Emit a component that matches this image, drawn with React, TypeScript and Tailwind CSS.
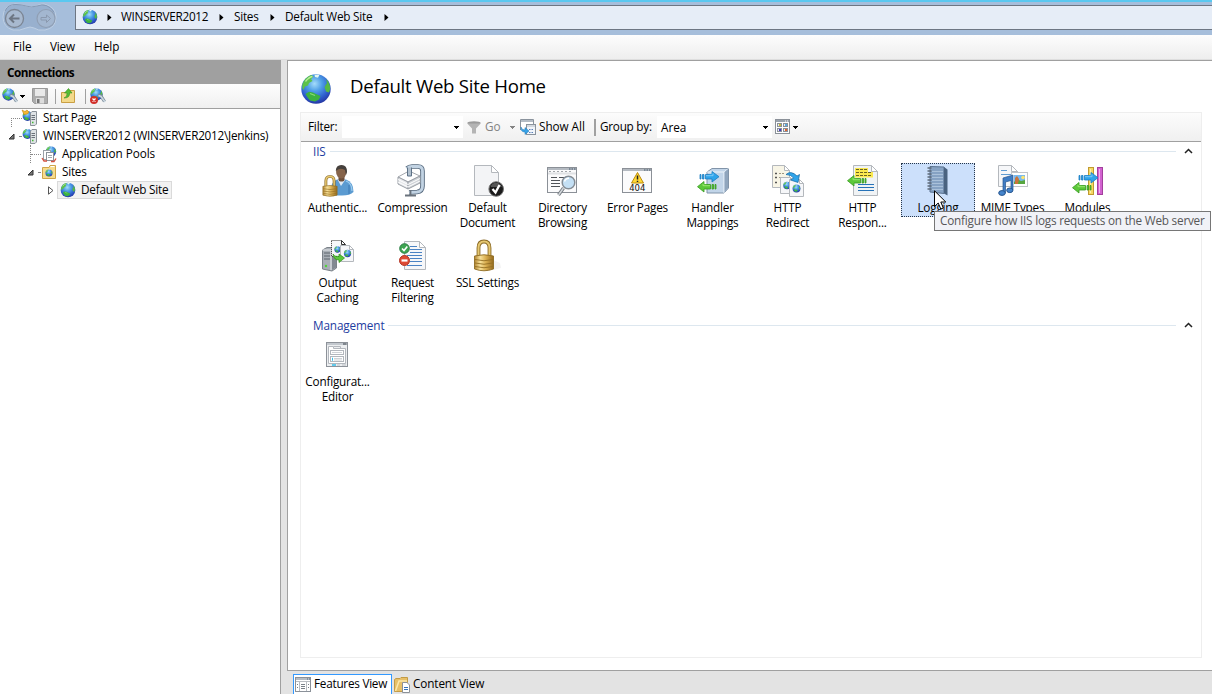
import React, { useId } from "react";

type IconProps = { className?: string };

function Svg({ size = 32, className = "", children }: { size?: number; className?: string; children: React.ReactNode }) {
  return (
    <svg width={size} height={size} viewBox={`0 0 ${size} ${size}`} className={`shrink-0 overflow-visible ${className}`} fill="none">
      {children}
    </svg>
  );
}

function GlobeShape({ cx, cy, r }: { cx: number; cy: number; r: number }) {
  const id = useId();
  return (
    <g transform={`translate(${cx - r} ${cy - r}) scale(${r / 15})`}>
      <defs>
        <radialGradient id={id} cx="0.45" cy="0.32" r="0.72">
          <stop offset="0" stopColor="#a4dcfa" />
          <stop offset="0.35" stopColor="#4f9fe6" />
          <stop offset="0.7" stopColor="#2f5fce" />
          <stop offset="1" stopColor="#232f9c" />
        </radialGradient>
      </defs>
      <circle cx="15" cy="15" r="14.7" fill={`url(#${id})`} />
      <path d="M1.500 10 Q4 3.500 10 1 L12.500 2.500 10 5 11.500 7 8 9 7 11.500 4 12.500 2.500 16 Q0.500 14 1.500 10Z" fill="#5cc24a" />
      <path d="M4.500 20 L8 17.800 12 18.500 15 20 19.500 22 18 25.500 14 27.500 9 26.500 7 24Z" fill="#3cb23f" />
      <path d="M25 5 L27.500 8 Q30.500 14 28 18.500 L25 17.500 23.500 13 26 9Z" fill="#55b944" />
      <path d="M13.500 0.800 L18.500 0.800 17 3.800 14 3Z" fill="#e4f7ee" />
      <path d="M4.500 7.500 Q8 3 11.500 2.500" stroke="#b9ec9a" strokeWidth="1.300" />
      <path d="M9 19.500 L14 21.500" stroke="#8adc74" strokeWidth="1.200" />
    </g>
  );
}

function Globe({ size = 16, r = 7.5, className = "" }: { size?: number; r?: number; className?: string }) {
  return (
    <Svg size={size} className={className}>
      <GlobeShape cx={size / 2} cy={size / 2} r={r} />
    </Svg>
  );
}

function Lock({ x, y, w, h }: { x: number; y: number; w: number; h: number }) {
  const id = useId();
  return (
    <g transform={`translate(${x} ${y}) scale(${w / 20} ${h / 31})`}>
      <defs>
        <linearGradient id={id} x1="0" x2="1" y1="0" y2="0">
          <stop offset="0" stopColor="#b38530" />
          <stop offset="0.3" stopColor="#f7e19a" />
          <stop offset="0.6" stopColor="#d9ae50" />
          <stop offset="1" stopColor="#946a1e" />
        </linearGradient>
      </defs>
      <path d="M4.5 17 V8 Q4.5 1.5 10 1.5 Q15.500 1.5 15.500 8 V17" stroke="#8a6a26" strokeWidth="3.800" />
      <path d="M4.500 17 V8 Q4.500 1.500 10 1.500 Q15.500 1.500 15.500 8 V17" stroke="#e6c872" strokeWidth="2" />
      <path d="M0.5 16 Q10 13.5 19.500 16 V29 Q10 32.500 0.5 29Z" fill={`url(#${id})`} stroke="#8f6c24" strokeWidth="0.9" />
      <path d="M1 19.500 Q10 22 19 19.500 M1 23 Q10 25.500 19 23 M1 26.500 Q10 29 19 26.500" stroke="#946f24" strokeWidth="0.9" />
    </g>
  );
}

function Page({ x, y, w, h, fold = 6, fill = "#f6f7f9", dashed = false }: { x: number; y: number; w: number; h: number; fold?: number; fill?: string; dashed?: boolean }) {
  return (
    <g transform={`translate(${x + 0.5} ${y + 0.5})`} stroke={dashed ? "#333" : "#b4b8bd"}>
      <path d={`M0 0 H${w - fold} L${w} ${fold} V${h} H0Z`} fill={fill} strokeDasharray={dashed ? "1 1" : undefined} />
      <path d={`M${w - fold} 0 V${fold} H${w}Z`} fill="#fff" />
    </g>
  );
}

const BLUE = "#2fa4ea";
const GREEN = "#5cc83a";

function ArrowRight({ x, y }: { x: number; y: number }) {
  return (
    <g transform={`translate(${x} ${y})`} fill={BLUE} stroke="#1d7cc0" strokeWidth="0.8">
      <path d="M0 3.500 H1 V8 H0Z M2.500 3.500 H4 V8 H2.500Z" />
      <path d="M5.500 3.500 H12 V0.500 L19 5.700 12 11 V8 H5.500Z" />
      <path d="M6 4.700 H13 V2.500" stroke="#8fd3fa" />
    </g>
  );
}

function ArrowLeft({ x, y }: { x: number; y: number }) {
  return (
    <g transform={`translate(${x} ${y})`} fill={GREEN} stroke="#369b20" strokeWidth="0.8">
      <path d="M19 3.500 H18 V8 H19Z M16.500 3.500 H15 V8 H16.500Z" />
      <path d="M13.500 3.500 H7 V0.500 L0.500 5.700 7 11 V8 H13.500Z" />
      <path d="M13 4.700 H6 V2.800" stroke="#a6ec7c" />
    </g>
  );
}

function AuthIcon() {
  return (
    <Svg>
      <path d="M8 29 Q8 17 15 14.500 H24 Q31.500 17 31.500 27 Q28 30.500 20 30.500 Q12 30.500 8 29Z" fill="#5b9bd1" />
      <path d="M15.500 14.500 L19 21 23.500 14.500Z" fill="#dfeaf4" />
      <path d="M27 20 V29" stroke="#3c78b4" />
      <path d="M24 16 Q30 18 30 26" stroke="#9ccbee" strokeWidth="1.3" />
      <rect x="16.500" y="10" width="6" height="6.500" rx="2" fill="#6d4f3a" />
      <ellipse cx="19.300" cy="7" rx="5.200" ry="6.500" fill="#85634a" />
      <path d="M13.800 6 Q13.800 0 19.500 0 Q25.200 0 25 7 L24 10 23 5 Q19 3 16 4.500Z" fill="#45403c" />
      <Lock x={0.5} y={10.500} w={15} h={21} />
    </Svg>
  );
}

function CompressionIcon() {
  return (
    <Svg>
      <path d="M10 3.500 Q12 1.500 15 1.500 H21 Q25.500 1.500 25.500 6 V21 Q25.500 26.500 20 27 L12 27.500" stroke="#56697d" strokeWidth="4.600" />
      <path d="M10 3.500 Q12 1.500 15 1.500 H21 Q25.500 1.500 25.500 6 V21 Q25.500 26.500 20 27 L12 27.500" stroke="#c2d3e3" strokeWidth="2.800" />
      <path d="M1 12 L12 6 23 11 11 17Z" fill="#fff" stroke="#a4a8ae" />
      <path d="M1 12 V19 L11 24 V17Z" fill="#e6e8eb" stroke="#9a9fa6" />
      <path d="M11 17 V24 L23 18 V11Z" fill="#cfd3d8" stroke="#9a9fa6" />
      <path d="M1 14.500 L11 19.500 23 13.500 M1 17 L11 22 23 16" stroke="#fff" />
      <path d="M10.500 2.500 V11 H14.500 V2.500" fill="#b2c1cf" stroke="#5d7186" />
      <path d="M13.500 25 V31 M8 30.500 H19" stroke="#6a737d" strokeWidth="1.800" />
    </Svg>
  );
}

function DefaultDocIcon() {
  return (
    <Svg>
      <Page x={2} y={0} w={24} h={30} fold={7} fill="#f3f4f6" />
      <circle cx="24.200" cy="24" r="7.300" fill="#1b1b1b" stroke="#777" />
      <path d="M18.500 22 Q20 17.800 24 17.800 Q28.500 18 29.800 22Z" fill="#555" />
      <path d="M20.500 24 L23.500 27.500 27.500 20" stroke="#fff" strokeWidth="2.300" />
    </Svg>
  );
}

function WindowFrame({ x, y, w, h }: { x: number; y: number; w: number; h: number }) {
  return (
    <g>
      <rect x={x + 0.5} y={y + 0.5} width={w - 1} height={h - 1} fill="#fbfbfc" stroke="#8b9097" />
      <rect x={x + 1} y={y + 1} width={w - 2} height="2" fill="#b4bac1" />
      <path d={`M${x + w - 8} ${y + 2} h1.500 m1 0 h1.500 m1 0 h1.500`} stroke="#43566b" />
    </g>
  );
}

function DirectoryIcon() {
  return (
    <Svg>
      <WindowFrame x={0} y={2} w={30} h={26} />
      <path d="M1 8.500 H29" stroke="#dfe1e4" strokeWidth="2" />
      <path d="M2 6.500 H24" stroke="#a1a5aa" strokeDasharray="2 2" />
      <path d="M4 12.500 H10 M12 12.500 H20 M4 15.500 H13 M4 18.500 H13 M4 21.500 H13" stroke="#4f5358" />
      <path d="M16.500 23 L11.500 30" stroke="#757b81" strokeWidth="3.300" />
      <path d="M16.500 23 L11.500 30" stroke="#d5d9dd" strokeWidth="1.400" />
      <circle cx="21.500" cy="17.500" r="6.300" fill="#c4e0f5" stroke="#858d95" strokeWidth="1.500" />
      <path d="M17.500 16.500 Q18.500 13.200 22 13.200" stroke="#fff" strokeWidth="1.500" />
    </Svg>
  );
}

function ErrorPagesIcon() {
  return (
    <Svg>
      <WindowFrame x={0} y={3} w={30} h={25} />
      <path d="M15.500 7.500 L21.500 18 H9.500Z" fill="#ffd937" stroke="#bc8b0c" strokeLinejoin="round" />
      <path d="M15.500 10.500 V14.500 M15.500 15.700 V17" stroke="#222" strokeWidth="1.500" />
      <text x="15.300" y="26" textAnchor="middle" fontSize="8.500" fontFamily="DejaVu Sans, sans-serif" fill="#111">404</text>
    </Svg>
  );
}

function HandlerIcon() {
  return (
    <Svg>
      <path d="M10 7 L15 3.500 H31.500 V23 L27 28 H10Z" fill="#c2d5e9" stroke="#8194a9" />
      <path d="M10 7 H27 V28 M27 7 L31.500 3.500" stroke="#eef5fb" />
      <path d="M27.500 7 L31 4 V23 L27.500 27Z" fill="#8fa5bd" />
      <ArrowRight x={3} y={6} />
      <ArrowLeft x={0} y={16} />
    </Svg>
  );
}

function RedirectIcon() {
  return (
    <Svg>
      <Page x={0} y={0} w={17} h={22} fold={5} fill="#f8f5e6" />
      <path d="M3 8.500 H5 M3 12.500 H5 M3 17.500 H5" stroke="#555" strokeWidth="1.400" />
      <path d="M7 8.500 H13 M7 12.500 H9" stroke="#9d9681" strokeDasharray="2 1" />
      <Page x={8} y={12} w={14} h={16} fold={4} />
      <GlobeShape cx={15} cy={20.500} r={3.800} />
      <Page x={17} y={14} w={14} h={17} fold={4} />
      <GlobeShape cx={24.500} cy={23.500} r={4} />
      <path d="M14 9.500 Q19 5 25 11 L27.500 9.500 26 17.500 18.500 15 21.500 13 Q19 9.500 14 9.500Z" fill={BLUE} stroke="#12649f" strokeWidth="0.700" />
    </Svg>
  );
}

function ResponseIcon() {
  return (
    <Svg>
      <Page x={6} y={0} w={24} h={30} fold={6} fill="#f0f3f5" />
      <path d="M8 3 H21 V7 H26 V12.500 H8Z" fill="#fbe94e" />
      <path d="M9 4.500 H20 M9 7.500 H25 M9 10.500 H25" stroke="#6b6322" strokeDasharray="3 1" />
      <path d="M11 19.500 H27 M11 22.500 H27 M11 25.500 H27" stroke="#2672b8" />
      <ArrowLeft x={0} y={10} />
    </Svg>
  );
}

function LoggingIcon() {
  return (
    <Svg>
      <path d="M7 1.500 L21 2 V28.500 L7 27Z" fill="#86a2c3" stroke="#5a7391" />
      <path d="M21 2 L24.500 4.500 V30.500 L21 28.500Z" fill="#4a6380" />
      <path d="M9 6.500 H20 M9 9.500 H20 M9 12.500 H20 M9 15.500 H20 M9 18.500 H20 M9 21.500 H20 M9 24.500 H20" stroke="#aac1da" />
      <path d="M4.500 3 H8.500 M4.500 6 H8.500 M4.500 9 H8.500 M4.500 12 H8.500 M4.500 15 H8.500 M4.500 18 H8.500 M4.500 21 H8.500 M4.500 24 H8.500" stroke="#5d6a79" strokeWidth="1.300" />
    </Svg>
  );
}

function MimeIcon() {
  return (
    <Svg>
      <Page x={1} y={0} w={19} h={21} fold={6} />
      <path d="M4 5.500 H10 M4 9.500 H14" stroke="#5f9bd2" />
      <rect x="14.500" y="7.500" width="16" height="14" fill="#fff" stroke="#c0c4c9" />
      <rect x="17" y="10" width="11" height="9" fill="#78baf0" />
      <path d="M17 19 V17 L20 14 24 16 28 15 V19Z" fill="#57a63f" />
      <circle cx="26" cy="12.500" r="1.800" fill="#ffe46b" />
      <path d="M18 13 L20 11 22 14 21 19 H18Z" fill="#c9743a" />
      <path d="M6 13 L16 10 V25 H14 V15.500 L8.500 17 V28 H6Z" fill="#3f7cc4" stroke="#27568f" strokeWidth="0.700" />
      <ellipse cx="5" cy="28" rx="3.300" ry="2.400" fill="#4685cc" stroke="#27568f" />
      <ellipse cx="12.800" cy="25.300" rx="3.100" ry="2.300" fill="#4685cc" stroke="#27568f" />
    </Svg>
  );
}

function ModulesIcon() {
  return (
    <Svg>
      <rect x="16.500" y="2.500" width="5" height="27" fill="#f5d864" stroke="#c09a30" />
      <rect x="25.500" y="2.500" width="5" height="27" fill="#d262d0" stroke="#a33f9d" />
      <path d="M18.500 4 V28" stroke="#fdf0ac" />
      <path d="M27.500 4 V28" stroke="#f0b0ed" />
      <ArrowRight x={7} y={7} />
      <ArrowLeft x={0} y={17} />
    </Svg>
  );
}

function OutputIcon() {
  return (
    <Svg>
      <path d="M0.500 10 L5 7.500 H14.500 V28 L10 31 0.500 29Z" fill="#a9afb6" stroke="#7b8289" />
      <path d="M0.500 10 H9 V30" stroke="#e4e7ea" />
      <path d="M2 13 H8 M2 16 H8 M2 19 H8" stroke="#5c646d" />
      <path d="M10 10 L14 8 V27.500 L10 30Z" fill="#828991" />
      <circle cx="4" cy="26" r="1.200" fill="#4fd33a" />
      <Page x={9} y={0} w={14} h={16} fold={4} dashed />
      <GlobeShape cx={15.500} cy={9.500} r={3.200} />
      <Page x={18} y={5} w={13} h={16} fold={4} />
      <GlobeShape cx={25.500} cy={13.500} r={3.700} />
      <path d="M11 14 Q12 17 17 16.500 V14 L22.500 18 17 22.500 V20 Q11.500 20 11 14Z" fill={GREEN} stroke="#2d8f17" strokeWidth="0.700" />
    </Svg>
  );
}

function FilteringIcon() {
  return (
    <Svg>
      <Page x={7} y={1} w={21} h={28} fold={6} />
      <path d="M13 6.500 H20 M13 9.500 H25 M13 12.500 H25 M10 15.500 H25 M13 18.500 H25 M13 21.500 H25 M10 25.500 H25" stroke="#4b83c3" />
      <circle cx="7.500" cy="8.500" r="4.800" fill="#3da551" stroke="#2a7d44" />
      <path d="M5 8.500 L7 10.500 10.300 6.500" stroke="#fff" strokeWidth="1.600" />
      <circle cx="7.500" cy="20.500" r="5" fill="#de4a34" stroke="#b33424" />
      <path d="M4.500 20.500 H10.500" stroke="#fff" strokeWidth="2.200" />
    </Svg>
  );
}

function SslIcon() {
  return (
    <Svg>
      <path d="M21 30 L29 28 28 23 21 20Z" fill="#f3f3f3" />
      <Lock x={2} y={0} w={20} h={31} />
    </Svg>
  );
}

function ConfigIcon() {
  return (
    <Svg>
      <rect x="4.500" y="3.500" width="21" height="24" fill="#eceef0" stroke="#8d9299" />
      <path d="M5 5 H25" stroke="#c3c8ce" strokeWidth="2" />
      <path d="M21 5 H24.500" stroke="#3d444c" />
      <path d="M6.500 7.500 H11.500 V9.500 H23.500 V24.500 H6.500Z" fill="#fff" stroke="#b3b7bd" />
      <path d="M12 7.500 H18.500 V9" stroke="#b3b7bd" />
      <rect x="8.500" y="11.500" width="13" height="4" fill="#fff" stroke="#b3b7bd" />
      <rect x="8.500" y="17.500" width="13" height="5" fill="#fff" stroke="#b3b7bd" />
      <path d="M10 13.500 H20 M12 19.500 H20 M12 21 H20" stroke="#cfd2d6" />
      <path d="M10 19.500 H11 M10 21 H11 M10 26 H14" stroke="#36bde8" strokeWidth="1.300" />
      <path d="M15 26 H18 M20 26 H24" stroke="#b9bec4" />
    </Svg>
  );
}

function ServerSmall({ star = false }: { star?: boolean }) {
  return (
    <Svg size={16}>
      <GlobeShape cx={5.500} cy={6} r={5} />
      <path d="M8.500 3 L10 1.500 H14.500 V14 L13 15.500 H8.500Z" fill="#dfe3e6" stroke="#8a9198" />
      <path d="M9.500 5.500 H13 M9.500 7.500 H13 M9.500 9.500 H13" stroke="#6a7179" />
      <path d="M10 12.500 H11.500" stroke="#42bb33" strokeWidth="1.500" />
      {star && <path d="M0 0 L3 1.500 5 0 7 2 5.500 4 2 4.500Z" fill="#f4b832" stroke="#c48515" strokeWidth="0.600" />}
    </Svg>
  );
}

function PoolsSmall() {
  return (
    <Svg size={16}>
      <GlobeShape cx={10} cy={5.500} r={5.300} />
      <rect x="2.500" y="4.500" width="7" height="9" fill="#fff" stroke="#9aa1a8" />
      <rect x="5.500" y="6.500" width="7" height="8" fill="#fff" stroke="#8b9299" />
      <path d="M7 9.500 H11 M7 11.500 H11" stroke="#a1a7ad" />
      <path d="M1 12 L3 15 H6 M10 15.500 H13 L15 12.500" stroke="#d3503e" strokeWidth="1.300" />
    </Svg>
  );
}

function SitesSmall() {
  return (
    <Svg size={16}>
      <path d="M1.500 3.500 H8 L9 1.500 H14.500 V14.500 H1.500Z" fill="#f7dc8d" stroke="#cfa548" />
      <path d="M9.500 2.500 H13.500" stroke="#fff" />
      <GlobeShape cx={8} cy={9} r={3.600} />
    </Svg>
  );
}

function ConnectSmall({ remove = false }: { remove?: boolean }) {
  return (
    <Svg size={16}>
      <GlobeShape cx={6.500} cy={6.500} r={6.300} />
      <path d="M8 7 L11 8 14.500 13.500" stroke="#7b8b99" strokeWidth="3.200" />
      <path d="M8.500 7.500 L11 8.500 15 14" stroke="#c9d6df" strokeWidth="1.600" />
      {remove && (
        <g>
          <circle cx="4" cy="12" r="4" fill="#d1302a" />
          <path d="M2.500 10.500 L5.500 13.500 M5.500 10.500 L2.500 13.500" stroke="#fff" strokeWidth="1.300" />
        </g>
      )}
    </Svg>
  );
}

function SaveSmall() {
  return (
    <Svg size={16}>
      <path d="M0.500 0.500 H15.500 V15.500 H2.500 L0.500 13.500Z" fill="#adadad" stroke="#999" />
      <rect x="3" y="1" width="10" height="7" fill="#e9e9e9" />
      <rect x="4" y="10" width="8" height="5.500" fill="#dcdcdc" />
      <rect x="5" y="11" width="2.500" height="4" fill="#777" />
    </Svg>
  );
}

function UpFolderSmall() {
  return (
    <Svg size={16}>
      <path d="M1.500 4.500 H7 L8 2.500 H14.500 V14.500 H1.500Z" fill="#f4d98a" stroke="#c99f44" />
      <path d="M4 10 Q7.500 9 7 5 H4.500 L8.500 0.500 12 5 H9.500 Q10 10 4 10Z" fill="#55bd35" stroke="#378f1e" strokeWidth="0.600" />
    </Svg>
  );
}

function ShowAllIcon({ className = "" }: IconProps) {
  return (
    <Svg size={16} className={className}>
      <path d="M0.500 11 V0.500 H13.500 V5" fill="#fff" stroke="#8a939d" />
      <path d="M1 2 H13" stroke="#b4bcc5" strokeWidth="2" />
      <rect x="6.500" y="5.500" width="9" height="10" fill="#f1f5fa" stroke="#8a939d" />
      <path d="M7 7 H15" stroke="#b4bcc5" />
      <path d="M9 10.500 H14 M9 13.500 H14" stroke="#5a7fb8" strokeDasharray="1.500 1" />
      <path d="M1 8 Q1.500 11 5 11 V8.500 L9 12 5 15.500 V13 Q0.500 13 1 8Z" fill="#38a3e8" stroke="#1b75b5" strokeWidth="0.500" />
    </Svg>
  );
}

function ViewsIcon({ className = "" }: IconProps) {
  return (
    <Svg size={16} className={className}>
      <rect x="0.500" y="0.500" width="14" height="14" fill="#fff" stroke="#8b9199" />
      <path d="M1 2 H14" stroke="#9aa3ad" strokeWidth="2" />
      <path d="M10 2 H14" stroke="#fff" strokeDasharray="1 1" />
      <g fill="#e9ecef" stroke="#8b9199">
        <rect x="2.500" y="4.500" width="4" height="3" />
        <rect x="8.500" y="4.500" width="4" height="3" />
        <rect x="2.500" y="9.500" width="4" height="3" />
        <rect x="8.500" y="9.500" width="4" height="3" />
      </g>
      <rect x="4" y="5" width="2" height="2" fill="#c8b93a" />
      <rect x="10" y="5" width="2" height="2" fill="#5aaadf" />
      <rect x="4" y="10" width="2" height="2" fill="#4038c8" />
      <rect x="10" y="10" width="2" height="2" fill="#e0602c" />
    </Svg>
  );
}

function FeaturesTabIcon() {
  return (
    <Svg size={16}>
      <rect x="0.500" y="0.500" width="15" height="14" fill="#fff" stroke="#8b9199" />
      <path d="M1 2 H15" stroke="#b6bcc3" strokeWidth="2" />
      <path d="M1 4.500 H15 M4.500 4 V14 M11.500 4 V14" stroke="#b9bdc2" />
      <path d="M6 7.500 H10 M6 9.500 H10 M6 11.500 H10 M2 7.500 H3 M2 10.500 H3 M13 7.500 H14 M13 10.500 H14" stroke="#7a8087" />
      <path d="M12 2 H15" stroke="#54687c" strokeDasharray="1 1" />
    </Svg>
  );
}

function ContentTabIcon() {
  return (
    <Svg size={16}>
      <path d="M0.500 14.500 V2.500 L2 1.500 H6 L7 0.500 H13.500 V14.500Z" fill="#e7c068" stroke="#c39b45" />
      <path d="M1.500 14 L5 4 H13" stroke="#fbe7a9" strokeWidth="1.500" />
      <path d="M8.500 5.500 H13 L15.500 8 V15.500 H8.500Z" fill="#fff" stroke="#8b9199" />
      <path d="M10 10.500 H14 M10 12.500 H14" stroke="#3571b8" />
    </Svg>
  );
}

function Caret({ className = "" }: IconProps) {
  return (
    <svg width="5" height="3" viewBox="0 0 5 3" className={`shrink-0 ${className}`} shapeRendering="crispEdges">
      <path d="M0 0H5V1H4V2H3V3H2V2H1V1H0Z" fill="currentColor" />
    </svg>
  );
}

function Crumb({ className = "" }: IconProps) {
  return (
    <svg width="5" height="7" viewBox="0 0 5 7" className={`shrink-0 ${className}`}>
      <path d="M0.500 0 L4.500 3.500 0.500 7Z" fill="#000" />
    </svg>
  );
}

function TopBar() {
  return (
    <header className="flex h-[35px] shrink-0 border-t-2 border-[#5ac8f0] bg-[#a6bedb]">
      <div className="w-[75px] shrink-0">
        <svg width="60" height="31" viewBox="0 2 60 31" fill="none">
          <path d="M15 4 Q22 4 26 6 Q31 8 36 6 Q40 4 44 4 Q56 7 56 17 Q56 28 45 30 Q38 31 34 28 Q30 26 26 28 Q20 31 13 30 Q3 27 3 17 Q3 6 15 4Z" fill="#98b0ce" stroke="#bfd0e4" />
          <path d="M5 11 Q8 4 16 4.500 Q22 4.500 26 6 Q31 8 37 6 Q47 2 54 12" stroke="#8499b5" />
          <circle cx="14.500" cy="18.500" r="9" fill="#a8b9cf" stroke="#7b8593" strokeWidth="1.300" />
          <path d="M19.500 18.500 H10.500 M14 14.500 L10 18.500 14 22.500" stroke="#6d7683" strokeWidth="2" />
          <circle cx="46" cy="18.500" r="9" fill="#a3b7d0" stroke="#909fb4" strokeWidth="1.200" />
          <path d="M41 17.500 H46.500 V15 L50.500 18.500 46.500 22.500 V20 H41Z" stroke="#8a99ae" />
        </svg>
      </div>
      <nav className="mt-[3px] flex h-[25px] flex-1 items-center border border-r-0 border-[#6d7683] bg-[#e6edf7] pl-[6px]">
        <Globe className="-mt-[2px]" />
        <Crumb className="ml-[9px]" />
        <span className="-mt-[2px] ml-[9px] w-[87px] -tracking-[0.28px]">WINSERVER2012</span>
        <Crumb className="ml-[11px]" />
        <span className="-mt-[2px] ml-[10px] w-[24px] -tracking-[0.26px]">Sites</span>
        <Crumb className="ml-[12px]" />
        <span className="-mt-[2px] ml-[10px] w-[88px] -tracking-[0.22px]">Default Web Site</span>
        <Crumb className="ml-[11px]" />
      </nav>
    </header>
  );
}

function MenuBar() {
  return (
    <div className="flex h-[25px] shrink-0 items-center border-b border-[#dedede] bg-gradient-to-b from-[#fdfdfd] to-[#eeeeee] pb-[2px] pl-[13px]">
      <span className="w-[37px]">File</span>
      <span className="w-[44px] -tracking-[0.2px]">View</span>
      <span>Help</span>
    </div>
  );
}

function Expander({ open }: { open: boolean }) {
  return open ? (
    <svg width="7" height="7" viewBox="0 0 7 7" className="shrink-0">
      <path d="M6 1 V6 H1Z" fill="#777" stroke="#333" />
    </svg>
  ) : (
    <svg width="6" height="9" viewBox="0 0 6 9" className="shrink-0">
      <path d="M0.500 0.800 L5 4.500 0.500 8.200Z" fill="#fff" stroke="#555" />
    </svg>
  );
}

function Connections() {
  return (
    <aside className="flex w-[281px] shrink-0 flex-col border-r border-[#a0a0a0] bg-white">
      <div className="flex h-6 items-center bg-[#a0a0a0] pl-[7px] pt-px font-bold -tracking-[0.5px]">Connections</div>
      <div className="flex h-[25px] items-center border-b border-[#a0a0a0] bg-gradient-to-b from-[#fdfdfd] to-[#f0f0f0] pl-[2px]">
        <ConnectSmall />
        <Caret className="ml-[2px]" />
        <span className="w-[7px]" />
        <SaveSmall />
        <span className="ml-[7px] h-[15px] w-px bg-[#a0a0a0]" />
        <span className="w-[4px]" />
        <UpFolderSmall />
        <span className="ml-[9px] h-[15px] w-px bg-[#a0a0a0]" />
        <span className="w-[4px]" />
        <ConnectSmall remove />
      </div>
      <ul className="text-black">
        <li className="flex h-[18px] items-center pl-[11px]">
          <span className="mt-[9px] h-[9px] w-[11px] shrink-0 border-l border-t border-dotted border-[#888]" />
          <ServerSmall star />
          <span className="-mt-[2px] ml-[5px] -tracking-[0.24px]">Start Page</span>
        </li>
        <li className="flex h-[18px] items-center pl-[8px]">
          <Expander open />
          <span className="ml-[4px] mr-px w-[2px] border-t border-dotted border-[#888]" />
          <ServerSmall />
          <span className="-mt-[2px] ml-[5px] whitespace-nowrap -tracking-[0.26px]">WINSERVER2012 (WINSERVER2012\Jenkins)</span>
        </li>
        <li className="flex h-[18px] items-center pl-[30px]">
          <span className="h-[18px] w-px border-l border-dotted border-[#888]" />
          <span className="w-[10px] border-t border-dotted border-[#888]" />
          <PoolsSmall />
          <span className="-mt-[2px] ml-[5px] -tracking-[0.06px]">Application Pools</span>
        </li>
        <li className="flex h-[18px] items-center pl-[27px]">
          <Expander open />
          <span className="ml-[4px] mr-px w-[2px] border-t border-dotted border-[#888]" />
          <SitesSmall />
          <span className="-mt-[2px] ml-[5px] -tracking-[0.26px]">Sites</span>
        </li>
        <li className="flex h-[18px] items-center pl-[48px]">
          <Expander open={false} />
          <span className="ml-[3px] flex h-[18px] w-[115px] items-center border border-[#dadada] bg-[#f2f2f2] pl-[2px]">
            <Globe r={7.5} />
            <span className="-mt-[2px] ml-[5px] whitespace-nowrap -tracking-[0.22px]">Default Web Site</span>
          </span>
        </li>
      </ul>
    </aside>
  );
}

type Feature = { icon: React.ReactNode; lines: string[]; tip?: string };

const iis: Feature[] = [
  { icon: <AuthIcon />, lines: ["Authentic..."] },
  { icon: <CompressionIcon />, lines: ["Compression"] },
  { icon: <DefaultDocIcon />, lines: ["Default", "Document"] },
  { icon: <DirectoryIcon />, lines: ["Directory", "Browsing"] },
  { icon: <ErrorPagesIcon />, lines: ["Error Pages"] },
  { icon: <HandlerIcon />, lines: ["Handler", "Mappings"] },
  { icon: <RedirectIcon />, lines: ["HTTP", "Redirect"] },
  { icon: <ResponseIcon />, lines: ["HTTP", "Respon..."] },
  { icon: <LoggingIcon />, lines: ["Logging"], tip: "Configure how IIS logs requests on the Web server" },
  { icon: <MimeIcon />, lines: ["MIME Types"] },
  { icon: <ModulesIcon />, lines: ["Modules"] },
  { icon: <OutputIcon />, lines: ["Output", "Caching"] },
  { icon: <FilteringIcon />, lines: ["Request", "Filtering"] },
  { icon: <SslIcon />, lines: ["SSL Settings"] },
];

const management: Feature[] = [{ icon: <ConfigIcon />, lines: ["Configurat...", "Editor"] }];

function Tile({ feature }: { feature: Feature }) {
  return (
    <div className="relative flex h-[75px] w-[75px] flex-col items-center">
      <div
        className={
          feature.tip
            ? "ml-px flex h-[54px] w-[74px] flex-col items-center border border-dotted border-[#26364a] bg-[#cce0fb] pt-px"
            : "flex flex-col items-center pt-[2px]"
        }
      >
        <div className="pl-px">{feature.icon}</div>
        <div className="mt-[3px] whitespace-nowrap text-center leading-[15px] -tracking-[0.2px]">
          {feature.lines.map((line) => (
            <div key={line}>{line}</div>
          ))}
        </div>
      </div>
      {feature.tip && (
        <>
          <div className="absolute left-[34px] top-[48px] z-10 flex h-5 w-[277px] items-center border border-[#767676] bg-[#f1f2f7] pb-px pl-[5px] text-[#575757]">
            <span className="whitespace-nowrap -tracking-[0.22px]">{feature.tip}</span>
          </div>
          <svg width="13" height="20" viewBox="0 0 13 20" className="absolute left-[34px] top-[27px] z-20">
            <path d="M0.500 0.800 V16.500 L4.200 13 6.800 19 9.300 18 6.800 12 H11.800Z" fill="#fff" stroke="#000" />
          </svg>
        </>
      )}
    </div>
  );
}

function Group({ title, features, className }: { title: string; features: Feature[]; className: string }) {
  return (
    <section className={className}>
      <div className="flex h-[18px] items-center pl-[12px]">
        <span className="text-[#1e3ca0] -tracking-[0.12px]">{title}</span>
        <span className="ml-[4px] h-px flex-1 bg-[#dde7ef]" />
        <svg width="9" height="6" viewBox="0 0 9 6" className="ml-[8px] mr-[8px]" fill="none">
          <path d="M1 5 L4.500 1.500 8 5" stroke="#222" strokeWidth="1.500" />
        </svg>
      </div>
      <div className="-ml-px mt-[3px] flex w-[840px] flex-wrap">
        {features.map((f) => (
          <Tile key={f.lines.join(" ")} feature={f} />
        ))}
      </div>
    </section>
  );
}

function FilterBar() {
  return (
    <div className="flex h-[29px] items-center border-b border-[#a0a0a0] bg-gradient-to-b from-[#fcfcfc] to-[#f0f0f0] pl-[7px]">
      <span className="-mt-[2px] w-[34px] -tracking-[0.2px]">Filter:</span>
      <div className="flex h-[22px] w-[121px] items-center justify-end bg-white pr-[4px]">
        <Caret />
      </div>
      <svg width="14" height="13" viewBox="0 0 14 13" className="ml-[4px]">
        <ellipse cx="7" cy="2" rx="6.700" ry="1.800" fill="#9b9b9b" />
        <path d="M0.300 2.500 L5 7.500 V12.500 H9 V7.500 L13.700 2.500Z" fill="#b4b4b4" />
      </svg>
      <span className="-mt-[2px] ml-[4px] w-[25px] text-[#838383]">Go</span>
      <Caret className="text-[#838383]" />
      <ShowAllIcon className="ml-[5px]" />
      <span className="-mt-[2px] ml-[3px] w-[55px] whitespace-nowrap -tracking-[0.05px]">Show All</span>
      <span className="h-[17px] w-[2px] bg-[#a0a0a0]" />
      <span className="-mt-[2px] ml-[4px] w-[57px] whitespace-nowrap -tracking-[0.25px]">Group by:</span>
      <div className="flex h-[22px] w-[115px] items-center justify-between bg-white pl-[4px] pr-[4px]">
        <span>Area</span>
        <Caret />
      </div>
      <ViewsIcon className="ml-[3px]" />
      <Caret className="ml-[2px]" />
    </div>
  );
}

function Main() {
  return (
    <main className="ml-[6px] flex min-w-0 flex-1 flex-col">
      <div className="flex h-[611px] shrink-0 flex-col border border-r-0 border-[#a0a0a0] bg-white pl-[12px]">
        <div className="flex h-[51px] items-center">
          <Globe size={32} r={15} className="mt-[4px]" />
          <h1 className="ml-[18px] text-[18.600px] leading-none -tracking-[0.26px]">Default Web Site Home</h1>
        </div>
        <div className="h-[546px] w-[902px] border border-[#eeeeee]">
          <FilterBar />
          <Group title="IIS" features={iis} className="h-[174px]" />
          <Group title="Management" features={management} className="" />
        </div>
      </div>
      <div className="flex flex-1 items-start pl-[6px] pt-[3px]">
        <div className="flex h-[21px] w-[99px] items-center border border-[#3399ff] bg-white pl-px">
          <FeaturesTabIcon />
          <span className="-mt-[2px] ml-[3px] whitespace-nowrap -tracking-[0.25px]">Features View</span>
        </div>
        <div className="flex h-[21px] items-center pl-[2px]">
          <ContentTabIcon />
          <span className="-mt-[2px] ml-[3px] -tracking-[0.12px]">Content View</span>
        </div>
      </div>
    </main>
  );
}

export default function App() {
  return (
    <div className="flex h-[694px] w-[1212px] flex-col overflow-hidden bg-[#e3e3e3] font-['Open_Sans','Noto_Sans',sans-serif] text-[11.750px] leading-[15px] text-black">
      <TopBar />
      <MenuBar />
      <div className="flex min-h-0 flex-1">
        <Connections />
        <Main />
      </div>
    </div>
  );
}
